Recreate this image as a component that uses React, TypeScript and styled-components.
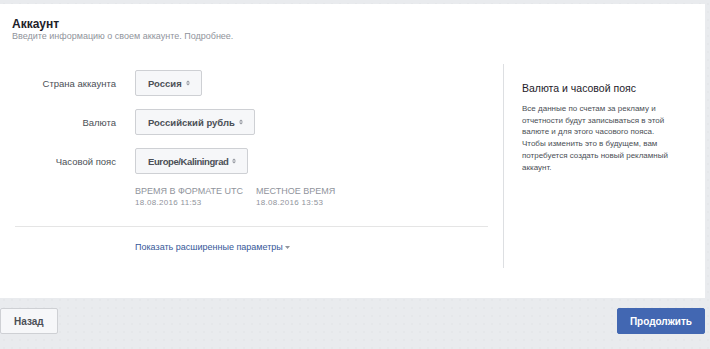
import React from "react";
import styled, { createGlobalStyle } from "styled-components";

const COLORS = {
  BG: "#e9ebee",
  TEXT: "#4b4f56",
  DARK: "#1d2129",
  GREY: "#90949c",
  LINK: "#365899",
  BLUE: "#4267b2",
  BORDER: "#ced0d4",
};

const GlobalStyle = createGlobalStyle`
  html, body {
    margin: 0;
    padding: 0;
    background: ${COLORS.BG};
    font-family: "Liberation Sans", Arial, sans-serif;
  }
`;

const StyledPage = styled.div`
  width: 710px;
  height: 349px;
  box-sizing: border-box;
  padding-top: 4px;
  background-color: ${COLORS.BG};
  background-image: radial-gradient(rgba(0, 0, 0, 0.035) 0.6px, transparent 0.8px);
  background-size: 8px 8px;
`;

const StyledCard = styled.section`
  background: #fff;
  width: 705px;
  height: 294px;
  box-sizing: border-box;
  display: flex;
  flex-direction: column;
`;

const StyledHeader = styled.header`
  padding: 13px 12px 0;

  .header-title {
    margin: 0;
    font-size: 12px;
    font-weight: bold;
    color: ${COLORS.DARK};
    line-height: 14px;
  }

  .header-subtitle {
    margin: 0;
    font-size: 9px;
    color: ${COLORS.GREY};
    line-height: 11px;
  }
`;

const StyledBody = styled.div`
  display: flex;
  margin-top: 22px;
`;

const StyledForm = styled.div`
  width: 503px;
  box-sizing: border-box;
  padding: 6px 15px 0;
`;

const StyledRow = styled.div`
  display: grid;
  grid-template-columns: 101px auto;
  column-gap: 19px;
  align-items: center;
  margin-bottom: 13px;

  .row-label {
    text-align: right;
    font-size: 9.5px;
    color: ${COLORS.TEXT};
  }
`;

const StyledSelect = styled.button<{ $condensed?: boolean }>`
  justify-self: start;
  height: 26px;
  box-sizing: border-box;
  padding: 0 11px 0 12px;
  border: 1px solid ${COLORS.BORDER};
  border-radius: 2px;
  background: #f6f7f9;
  font-family: inherit;
  font-size: 9.5px;
  font-weight: bold;
  letter-spacing: ${(p) => (p.$condensed ? "-0.4px" : "0")};
  color: ${COLORS.TEXT};
  display: flex;
  align-items: center;
  gap: 4px;
`;

const Arrows = () => (
  <svg width="4" height="6" viewBox="0 0 4 6">
    <path d="M0 2.5L2 0.5L4 2.5Z M0 3.5L2 5.5L4 3.5Z" fill="#90949c" />
  </svg>
);

const StyledTimes = styled.div`
  display: flex;
  gap: 13px;
  margin: -1px 0 0 120px;

  .times-title {
    font-size: 9px;
    color: ${COLORS.GREY};
    text-transform: uppercase;
    line-height: 11px;
  }

  .times-value {
    font-size: 8px;
    color: ${COLORS.GREY};
    line-height: 11px;
    letter-spacing: 0.3px;
  }
`;

const StyledDivider = styled.hr`
  border: 0;
  border-top: 1px solid #e5e5e5;
  margin: 18px 0 0;
`;

const StyledMore = styled.div`
  margin: 15px 0 0 120px;
  font-size: 9px;
  color: ${COLORS.LINK};
  display: flex;
  align-items: center;
  gap: 2px;
`;

const StyledAside = styled.aside`
  flex: 1;
  box-sizing: border-box;
  height: 204px;
  border-left: 1px solid #dddfe2;
  padding: 18px 10px 0 18px;

  .aside-title {
    margin: 0;
    font-size: 10.5px;
    font-weight: normal;
    color: ${COLORS.DARK};
  }

  .aside-text {
    margin: 9px 0 0;
    font-size: 8px;
    line-height: 11.7px;
    color: ${COLORS.TEXT};
    white-space: nowrap;
  }
`;

const StyledFooter = styled.footer`
  display: flex;
  justify-content: space-between;
  padding: 10px 5px 0 0;
`;

const StyledButton = styled.button<{ $primary?: boolean }>`
  height: 26px;
  box-sizing: border-box;
  padding: 0 ${(p) => (p.$primary ? "12px" : "13px")};
  border: 1px solid ${(p) => (p.$primary ? COLORS.BLUE : COLORS.BORDER)};
  border-radius: 2px;
  background: ${(p) => (p.$primary ? COLORS.BLUE : "#f6f7f9")};
  color: ${(p) => (p.$primary ? "#fff" : COLORS.TEXT)};
  font-family: inherit;
  font-size: 10px;
  font-weight: bold;
`;

const rows = [
  { label: "Страна аккаунта", value: "Россия" },
  { label: "Валюта", value: "Российский рубль" },
  { label: "Часовой пояс", value: "Europe/Kaliningrad", condensed: true },
];

const asideLines = [
  "Все данные по счетам за рекламу и",
  "отчетности будут записываться в этой",
  "валюте и для этого часового пояса.",
  "Чтобы изменить это в будущем, вам",
  "потребуется создать новый рекламный",
  "аккаунт.",
];

const App = () => {
  return (
    <>
      <GlobalStyle />
      <StyledPage>
        <StyledCard>
          <StyledHeader>
            <h1 className="header-title">Аккаунт</h1>
            <p className="header-subtitle">
              Введите информацию о своем аккаунте. Подробнее.
            </p>
          </StyledHeader>
          <StyledBody>
            <StyledForm>
              {rows.map((row) => (
                <StyledRow key={row.label}>
                  <span className="row-label">{row.label}</span>
                  <StyledSelect $condensed={row.condensed}>
                    {row.value}
                    <Arrows />
                  </StyledSelect>
                </StyledRow>
              ))}
              <StyledTimes>
                <div>
                  <div className="times-title">Время в формате UTC</div>
                  <div className="times-value">18.08.2016 11:53</div>
                </div>
                <div>
                  <div className="times-title">Местное время</div>
                  <div className="times-value">18.08.2016 13:53</div>
                </div>
              </StyledTimes>
              <StyledDivider />
              <StyledMore>
                Показать расширенные параметры
                <svg width="5" height="3" viewBox="0 0 5 3">
                  <path d="M0 0H5L2.5 3Z" fill={COLORS.GREY} />
                </svg>
              </StyledMore>
            </StyledForm>
            <StyledAside>
              <h2 className="aside-title">Валюта и часовой пояс</h2>
              <p className="aside-text">
                {asideLines.map((line, index) => (
                  <React.Fragment key={index}>
                    {line}
                    {index < asideLines.length - 1 && <br />}
                  </React.Fragment>
                ))}
              </p>
            </StyledAside>
          </StyledBody>
        </StyledCard>
        <StyledFooter>
          <StyledButton>Назад</StyledButton>
          <StyledButton $primary>Продолжить</StyledButton>
        </StyledFooter>
      </StyledPage>
    </>
  );
};

export default App;
